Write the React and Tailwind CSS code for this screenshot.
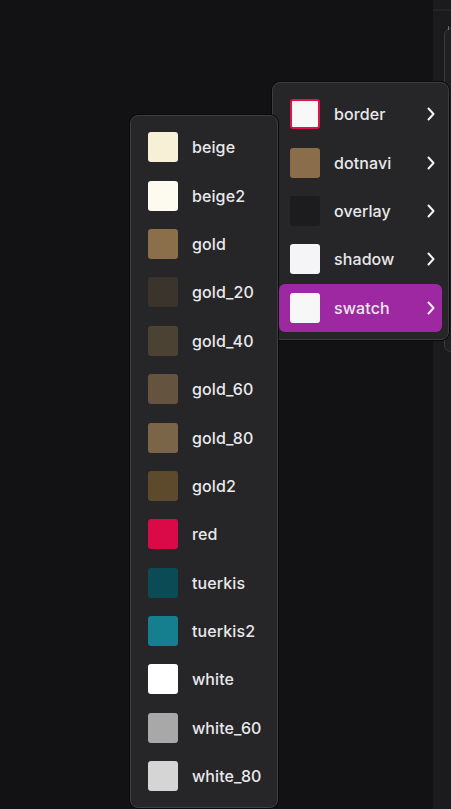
import React from "react";

const parent = [
  { name: "border", color: "#f8f8f8", ring: true },
  { name: "dotnavi", color: "#8a6e4b" },
  { name: "overlay", color: "#1c1b1e" },
  { name: "shadow", color: "#f5f5f7" },
  { name: "swatch", color: "#f7f7f7", active: true },
];

const swatches = [
  ["beige", "#f7efd6"],
  ["beige2", "#fdfbef"],
  ["gold", "#8b6f4b"],
  ["gold_20", "#3b342d"],
  ["gold_40", "#4c4234"],
  ["gold_60", "#63533f"],
  ["gold_80", "#7b6548"],
  ["gold2", "#5d4a2c"],
  ["red", "#d90a47"],
  ["tuerkis", "#0b4b56"],
  ["tuerkis2", "#157f8f"],
  ["white", "#ffffff"],
  ["white_60", "#a8a8a8"],
  ["white_80", "#d5d5d5"],
];

function Chevron() {
  return (
    <svg width="10" height="14" viewBox="0 0 10 14" fill="none">
      <path d="M2.5 1.5 L7.5 7 L2.5 12.5" stroke="#f2f2f4" strokeWidth="2" strokeLinecap="round" strokeLinejoin="round" />
    </svg>
  );
}

export default function App() {
  return (
    <div
      className="relative w-[451px] h-[809px] overflow-hidden bg-[#121214] flex"
      style={{ fontFamily: "Inter, 'Noto Sans', sans-serif" }}
    >
      <div className="flex-1" />
      <div className="w-[18px] bg-[#1b1b1d] flex flex-col">
        <div className="h-[9px]" />
        <div className="h-[2px] bg-[#242426]" />
        <div className="relative flex-1">
          <div className="absolute left-[11px] top-[17px] w-[20px] h-[324px] rounded-[7px] border border-[#3c3c3f] bg-[#202022]" />
          <div className="absolute left-[15px] top-[15px] w-[1px] h-[4px] bg-[#6a6a6c]" />
        </div>
      </div>

      {/* parent menu */}
      <div className="absolute left-[272px] top-[82px] w-[177px] rounded-[8px] border border-[#3e3d41] bg-[#262528] shadow-[0_0_0_1px_#0a0a0b] py-[7px] px-[6px]">
        {parent.map((p) => (
          <div
            key={p.name}
            className={`flex items-center h-[48.4px] pl-[11px] pr-[6px] rounded-[6px] ${p.active ? "bg-[#9e28a2]" : ""}`}
          >
            <div
              className={`w-[30px] h-[30px] rounded-[3px] ${p.ring ? "border-2 border-[#e0134a]" : ""}`}
              style={{ backgroundColor: p.color }}
            />
            <span className="ml-[14px] flex-1 text-[16px] font-medium leading-none text-[#e9e9eb] tracking-[0.1px]">{p.name}</span>
            <Chevron />
          </div>
        ))}
      </div>

      {/* submenu */}
      <div className="absolute left-[130px] top-[115px] w-[148px] rounded-[8px] border border-[#3e3d41] bg-[#262528] shadow-[0_0_0_1px_#0a0a0b] py-[7px] px-[6px]">
        {swatches.map(([n, c]) => (
          <div key={n} className="flex items-center h-[48.4px] pl-[11px]">
            <div className="w-[30px] h-[30px] rounded-[3px]" style={{ backgroundColor: c }} />
            <span className="ml-[14px] text-[16px] font-medium leading-none text-[#e9e9eb] tracking-[0.1px]">{n}</span>
          </div>
        ))}
      </div>
    </div>
  );
}
